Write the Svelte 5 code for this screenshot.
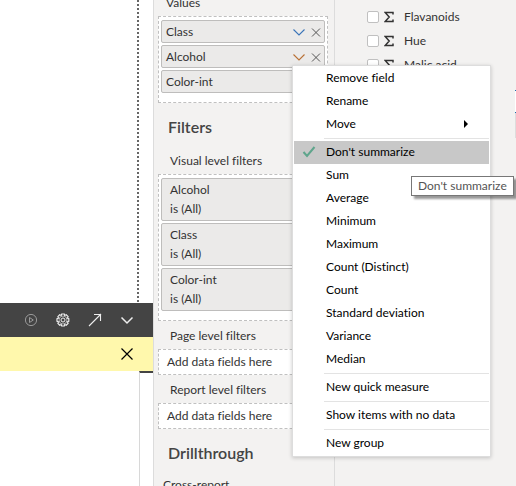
<script>
  const values = [{ name: 'Class', active: false }, { name: 'Alcohol', active: true }, { name: 'Color-int', active: false }];
  const filters = ['Alcohol', 'Class', 'Color-int'];
  const fields = ['Flavanoids', 'Hue', 'Malic acid'];
  const groups = [
    ['Remove field', 'Rename', 'Move'],
    ["Don't summarize", 'Sum', 'Average', 'Minimum', 'Maximum', 'Count (Distinct)', 'Count', 'Standard deviation', 'Variance', 'Median'],
    ['New quick measure'],
    ['Show items with no data'],
    ['New group']
  ];
</script>

<div class="app">
  <main class="canvas">
    <div class="page"></div>
    <div class="toolbar">
      <button aria-label="Run"><svg class="dim" width="14" height="14" viewBox="0 0 14 14"><circle cx="7" cy="7" r="5.6" /><path d="M5.500 4.500v5L9.300 7z" /></svg></button>
      <button aria-label="Settings"><svg width="14" height="14" viewBox="0 0 14 14"><path d="M5.7 1h2.6l.4 1.500 1.500-.7 1.900 1.900-.7 1.500 1.400.5v2.600l-1.400.5.7 1.500-1.900 1.900-1.500-.7-.4 1.500H5.700l-.5-1.500-1.500.7-1.800-1.900.7-1.500L1 8.300V5.700l1.600-.5-.7-1.500 1.800-1.900 1.500.7z" stroke-width="1.200" /><circle cx="7" cy="7" r="4" stroke-width=".6" /><circle cx="7" cy="7" r="2" /></svg></button>
      <button aria-label="Open"><svg width="14" height="14" viewBox="0 0 14 14"><path d="M1 13 13 1M6 1.500h6.500V8" stroke-width="1.100" /></svg></button>
      <button aria-label="Collapse"><svg width="14" height="14" viewBox="0 0 14 14"><path d="m1.500 4.500 5.500 5.500 5.500-5.500" stroke-width="1.500" /></svg></button>
    </div>
    <div class="notice">
      <button aria-label="Dismiss"><svg width="14" height="14" viewBox="0 0 14 14"><path d="m1.500 1.500 11 11M12.500 1.500l-11 11" stroke-width="1.200" /></svg></button>
    </div>
    <div class="editor"><div class="gutter"></div></div>
  </main>

  <aside class="pane">
    <p class="label values">Values</p>
    <div class="well">
      {#each values as v}
        <div class="chip">
          <span>{v.name}</span>
          <button aria-label="{v.name} options" class:active={v.active}><svg width="12" height="12" viewBox="0 0 12 12"><path d="m.5 3.500 5.500 5.500 5.500-5.500" stroke-width="1.100" /></svg></button>
          <button aria-label="Remove {v.name}"><svg width="10" height="12" viewBox="0 0 10 12"><path d="m1 2.500 8 8M9 2.500l-8 8" /></svg></button>
        </div>
      {/each}
    </div>
    <h2>Filters</h2>
    <p class="label first">Visual level filters</p>
    <div class="well">
      {#each filters as f}
        <div class="filter"><span>{f}</span><span>is (All)</span></div>
      {/each}
    </div>
    <p class="label">Page level filters</p>
    <div class="drop">Add data fields here</div>
    <p class="label">Report level filters</p>
    <div class="drop">Add data fields here</div>
    <h2>Drillthrough</h2>
    <p class="cross">Cross-report</p>
  </aside>

  <aside class="fields">
    {#each fields as f}
      <label>
        <input type="checkbox" />
        <svg width="10" height="12" viewBox="0 0 10 12"><path d="M9 3.500V1.500H1.200L5.200 6l-4 4.500H9v-2" /></svg>
        <span>{f}</span>
      </label>
    {/each}
  </aside>
  <div class="edge"></div>

  <div class="menu" role="menu">
    {#each groups as group, i}
      {#if i > 0}<hr />{/if}
      {#each group as item}
        <button role="menuitem" class:selected={item === "Don't summarize"}>
          <span class="mark">
            {#if item === "Don't summarize"}
              <svg width="14" height="12" viewBox="0 0 14 12"><path d="m1.500 6 3.500 4 7.500-9" /></svg>
            {/if}
          </span>
          <span class="text">{item}</span>
          {#if item === 'Move'}<svg class="arrow" width="4" height="8" viewBox="0 0 4 8"><path d="M0 0v8l4-4z" /></svg>{/if}
        </button>
      {/each}
    {/each}
  </div>
  <div class="tooltip" role="tooltip">Don't summarize</div>
</div>

<style>
  :global(body) { margin: 0; }
  .app {
    position: relative;
    display: grid;
    grid-template-columns: 153px 181px 1fr 1px;
    height: 100vh;
    overflow: hidden;
    background: #f3f2f1;
    color: #333;
    font: 12px/16px Lato, "Open Sans", sans-serif;
    font-variant-ligatures: none;
  }
  button { display: flex; align-items: center; padding: 0; border: 0; background: none; color: inherit; font: inherit; font-variant-ligatures: none; }
  svg { display: block; fill: none; stroke: currentColor; }
  p, h2 { margin: 0; }

  .canvas { display: flex; flex-direction: column; background: #fff; }
  .page {
    height: 303px;
    margin-right: 14px;
    background: repeating-linear-gradient(#666 0 2px, #fff 2px 4px) right / 2px 100% no-repeat;
  }
  .toolbar, .notice { display: flex; align-items: center; justify-content: flex-end; height: 34px; padding-right: 19px; }
  .toolbar { gap: 18px; background: #444; color: #eee; }
  .dim { color: #999; }
  .notice { background: #fff8ac; color: #000; }
  .editor { flex: 1; display: flex; justify-content: flex-end; }
  .gutter { width: 13px; border-left: 1px solid #d8d8d8; border-top: 2px solid #444; }

  .pane { min-width: 0; min-height: 0; padding: 0 6px 0 4px; border-left: 1px solid #dcdcdc; white-space: nowrap; }
  .label { height: 28px; padding-left: 12px; line-height: 30px; }
  .values { height: 16px; padding-left: 8px; line-height: 6px; }
  .first { height: 27px; line-height: 28px; }
  .well {
    display: flex;
    flex-direction: column;
    gap: 2px;
    padding: 3px 2px 9px;
    border: 1px dashed #c0c0c0;
    background: #fff;
  }
  .chip, .filter { box-sizing: border-box; border: 1px solid #bebdbc; border-radius: 2px; background: #ebeae9; }
  .chip { display: flex; align-items: center; gap: 6px; height: 23px; padding: 0 3px 0 4px; }
  .chip span { flex: 1; }
  .chip button { color: #555; }
  .chip button:nth-of-type(1) { color: #3a74b8; }
  .chip button.active { color: #b87035; }
  .filter { display: flex; flex-direction: column; gap: 3px; height: 43px; padding: 3px 8px; }
  h2 { padding: 13px 0 9px 10px; font-size: 16px; line-height: 22px; font-weight: 600; color: #444; }
  .drop { height: 24px; padding-left: 8px; border: 1px dashed #c0c0c0; background: #fff; line-height: 24px; }
  .cross { padding: 4px 0 0 5px; }

  .fields { display: flex; flex-direction: column; gap: 8px; padding: 9px 0 0 32px; border-left: 1px solid #dcdcdc; }
  .fields label { display: flex; align-items: center; height: 16px; }
  .fields input { appearance: none; box-sizing: border-box; width: 12px; height: 12px; margin: 0 5px 0 0; border: 1px solid #c0c0c0; border-radius: 2px; background: #fff; }
  .fields svg { margin-right: 10px; stroke-width: 1.5; }
  .edge {
    height: 48px;
    margin-top: 90px;
    background: linear-gradient(#1a6fb0 0 1px, #fff 1px 22px, #1a6fb0 22px 23px, #ddd 23px);
  }

  .menu {
    position: absolute;
    left: 292px;
    top: 65px;
    width: 195px;
    padding: 1px;
    border: 1px solid #ddd;
    background: #fff;
    box-shadow: 0 1px 4px rgba(0, 0, 0, 0.2);
    color: #000;
  }
  .menu button { width: 100%; height: 23px; padding-bottom: 2px; }
  .menu .selected { background: #c8c8c8; }
  .mark { width: 24px; padding-left: 8px; color: #5fa58c; }
  .mark svg { stroke-width: 2; }
  .text { flex: 1; text-align: left; }
  .arrow { margin-right: 21px; fill: #000; stroke: none; }
  hr { height: 1px; margin: 2px 0 2px 30px; border: 0; background: #e3e3e3; }
  .tooltip {
    position: absolute;
    left: 411px;
    top: 176px;
    padding: 1px 6px;
    border: 1px solid #777;
    background: #fff;
    color: #555;
    box-shadow: 3px 3px 2px rgba(0, 0, 0, 0.4);
    white-space: nowrap;
  }
</style>
